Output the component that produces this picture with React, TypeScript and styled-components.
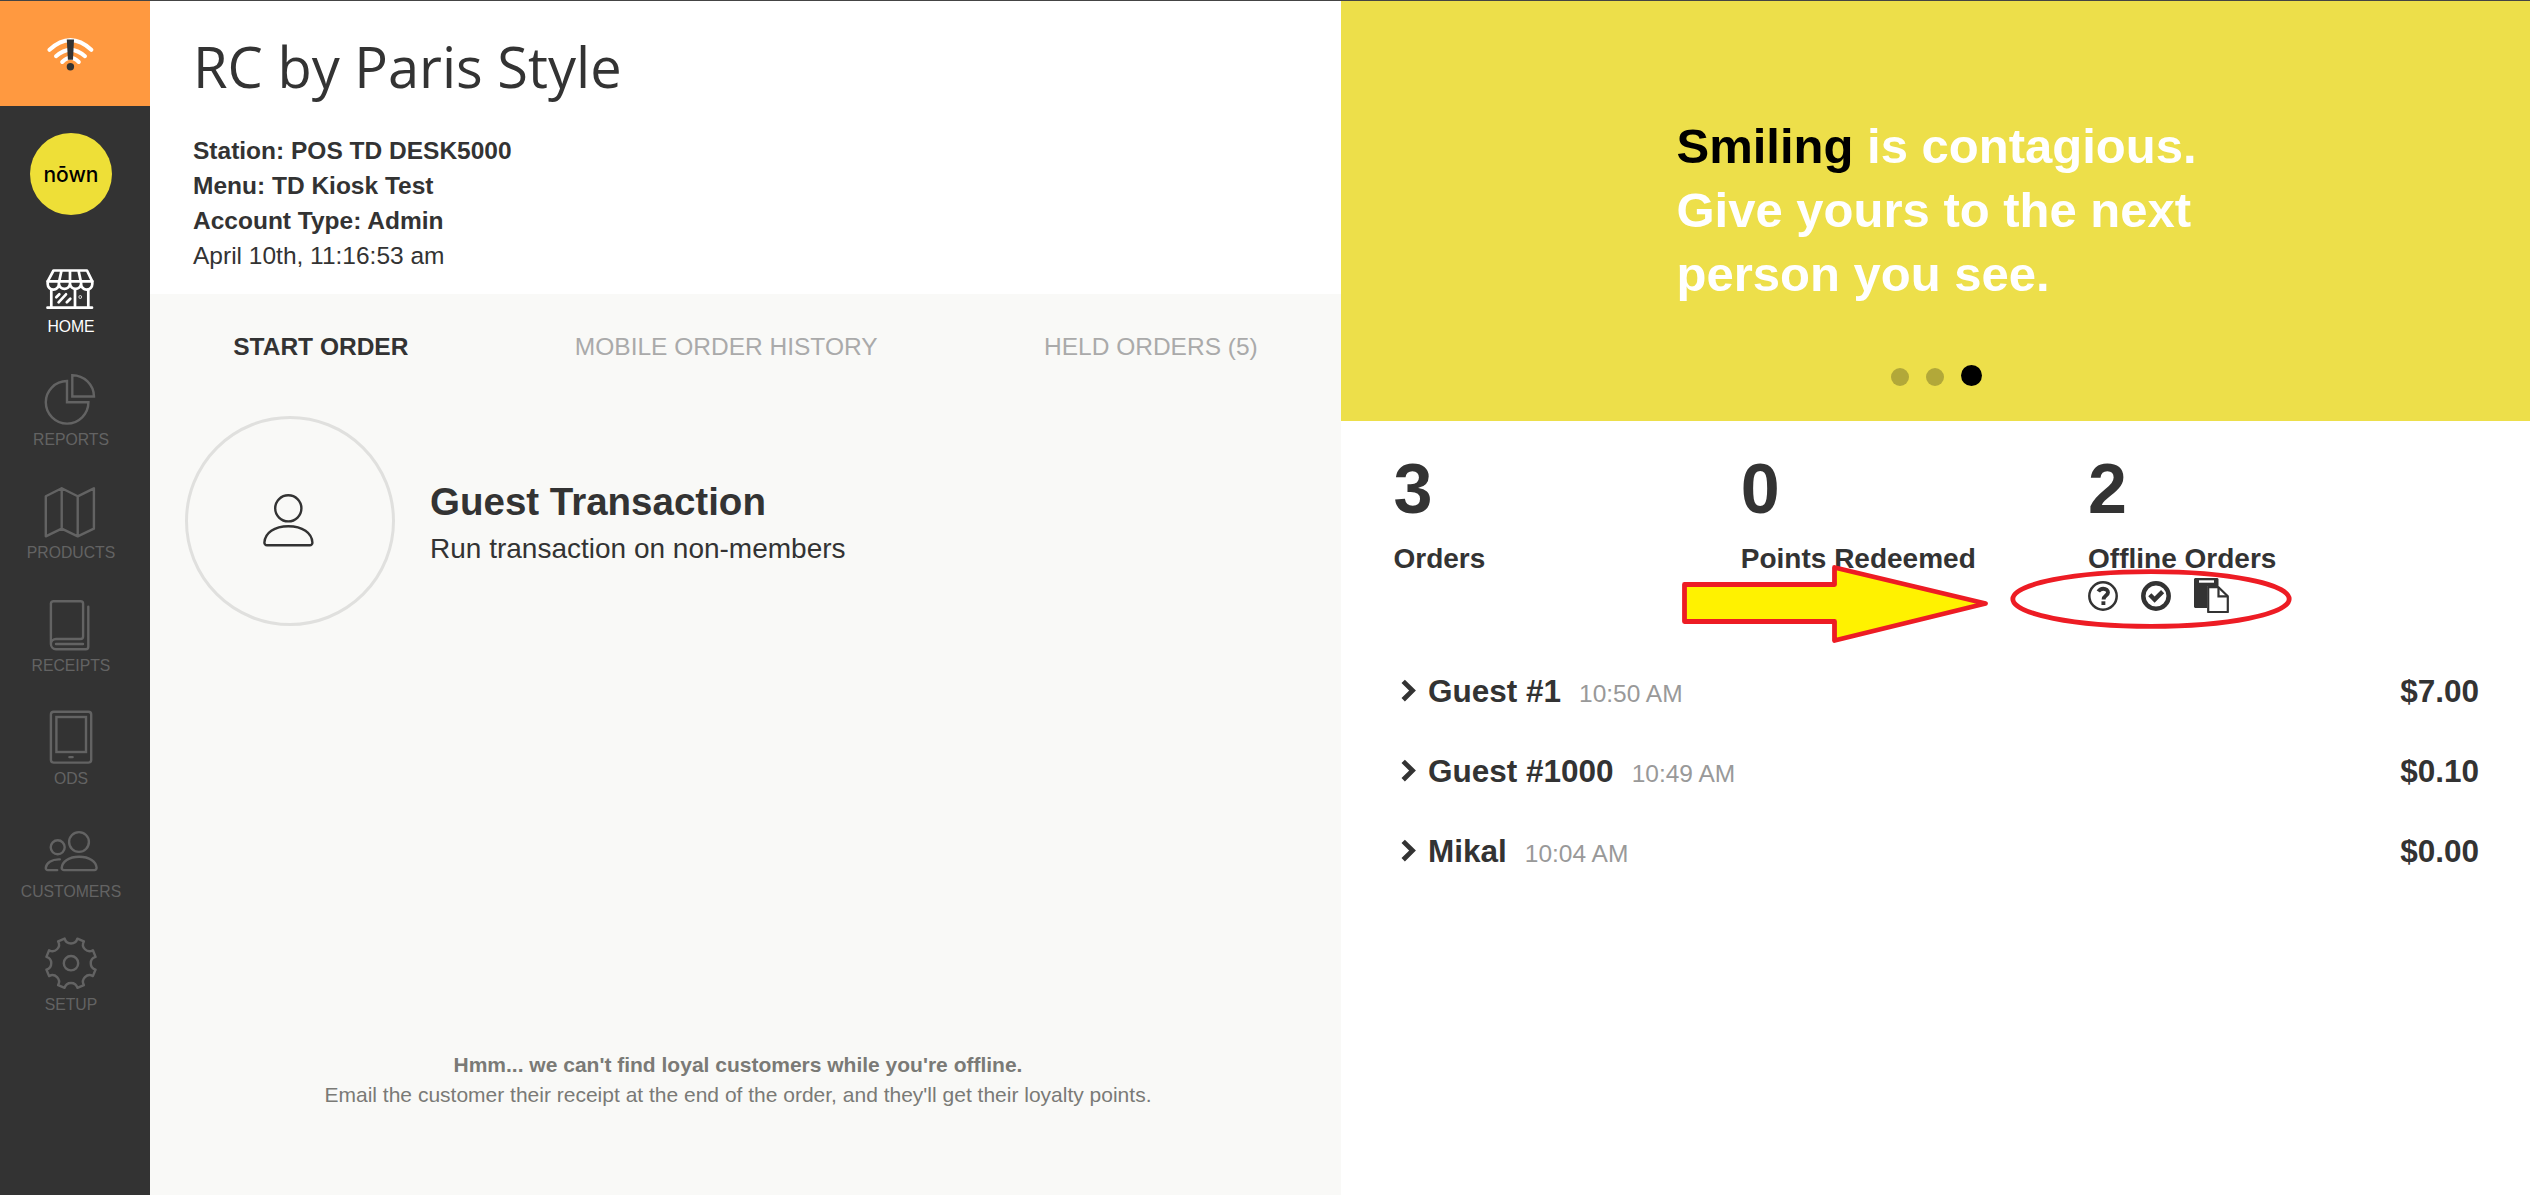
import { ReactNode, useState } from 'react';
import styled, { createGlobalStyle, css } from 'styled-components';

const GlobalStyle = createGlobalStyle`
  * {
    box-sizing: border-box;
  }
  body {
    margin: 0;
    color: #333;
    background-color: white;
    font-family: 'Liberation Sans', Arial, sans-serif;
  }
`;

const Container = styled.div`
  display: grid;
  grid-template-columns: 150px 1191px 1fr;
  height: 100vh;
  overflow: hidden;
  border-top: 1px solid #444;
`;

const Sidebar = styled.nav`
  display: flex;
  flex-direction: column;
  background-color: #333;
`;

const OfflineAlert = styled.div`
  display: flex;
  justify-content: center;
  align-items: center;
  height: 105px;
  padding-right: 8px;
  background-color: #ff9940;
`;

const Logo = styled.div`
  display: flex;
  justify-content: center;
  width: 82px;
  height: 82px;
  margin: 27px 0 46px 30px;
  border-radius: 50%;
  background-color: #eedf37;
  color: black;
  font-family: Inter, sans-serif;
  font-size: 21px;
  font-weight: 500;
  line-height: 83px;
`;

const NavItem = styled.a<{ active?: boolean }>`
  display: flex;
  flex-direction: column;
  align-items: center;
  height: 113px;
  padding-right: 8px;
  font-size: 15.75px;
  line-height: 20px;
  color: ${(prop) => (prop.active ? 'white' : '#636363')};
  cursor: pointer;
`;

const NavIcon = styled.svg`
  width: 52px;
  height: 52px;
  margin-bottom: 4px;
  overflow: visible;
  fill: none;
  stroke: currentColor;
  stroke-width: 2.4px;
  stroke-linecap: round;
  stroke-linejoin: round;
`;

const Main = styled.main`
  display: flex;
  flex-direction: column;
  background-color: #f9f9f7;
`;

const Header = styled.header`
  height: 293px;
  padding: 23px 43px 0;
  background-color: white;
`;

const Title = styled.h1`
  margin: 0 0 25px;
  font-family: 'Open Sans', sans-serif;
  font-size: 56px;
  font-weight: 400;
  line-height: 84px;
`;

const Info = styled.p<{ bold?: boolean }>`
  margin: 0;
  font-size: 24.5px;
  font-weight: ${(prop) => (prop.bold ? 'bold' : 'normal')};
  line-height: 35px;
`;

const Tabs = styled.div`
  display: flex;
  justify-content: space-around;
  padding-top: 35px;
`;

const Tab = styled.button<{ selected: boolean }>`
  padding: 0;
  border: none;
  background: none;
  font-family: inherit;
  font-size: 24.5px;
  line-height: 35px;
  cursor: pointer;
  ${(prop) =>
    prop.selected
      ? css`
          color: #333;
          font-weight: bold;
        `
      : css`
          color: #aaa;
          font-weight: normal;
        `};
`;

const Guest = styled.div`
  display: flex;
  align-items: center;
  gap: 35px;
  margin: 52px 0 0 35px;
`;

const Avatar = styled.div`
  display: flex;
  justify-content: center;
  align-items: center;
  width: 210px;
  height: 210px;
  border: 3px solid #e0e0de;
  border-radius: 50%;
`;

const GuestTitle = styled.div`
  font-size: 38.5px;
  font-weight: bold;
  line-height: 54px;
`;

const GuestText = styled.div`
  font-size: 28px;
  line-height: 39px;
`;

const Notice = styled.div`
  margin-top: auto;
  padding: 0 15px 85px 0;
  color: #7a7a76;
  font-size: 21px;
  line-height: 30px;
  text-align: center;
`;

const Side = styled.aside`
  display: flex;
  flex-direction: column;
  background-color: white;
`;

const Banner = styled.div`
  display: flex;
  flex-direction: column;
  align-items: center;
  justify-content: space-between;
  height: 420px;
  padding: 113px 0 35px 2px;
  background-color: #eddf4a;
`;

const Quote = styled.div`
  width: 520px;
  color: white;
  font-size: 49px;
  font-weight: bold;
  line-height: 64px;
  white-space: nowrap;
`;

const Highlight = styled.span`
  color: black;
`;

const Dots = styled.div`
  display: flex;
  align-items: flex-end;
  gap: 17px;
`;

const Dot = styled.span<{ current?: boolean }>`
  width: ${(prop) => (prop.current ? 21 : 18)}px;
  height: ${(prop) => (prop.current ? 21 : 18)}px;
  border-radius: 50%;
  background-color: ${(prop) => (prop.current ? 'black' : '#b2a839')};
`;

const Stats = styled.div`
  position: relative;
  display: grid;
  grid-template-columns: repeat(3, 347.3px);
  height: 230px;
  padding: 28px 0 0 52.5px;
`;

const StatValue = styled.div`
  margin-bottom: 12px;
  font-size: 70px;
  font-weight: bold;
  line-height: 80px;
`;

const StatLabel = styled.div`
  font-size: 28px;
  font-weight: bold;
  line-height: 36px;
`;

const StatIcons = styled.div`
  display: flex;
  align-items: center;
  gap: 23px;
  height: 35px;
  margin-top: 1px;
`;

const Callout = styled.svg`
  position: absolute;
  top: 0;
  left: 0;
  pointer-events: none;
  stroke: #ed1c24;
  stroke-width: 4.8px;
  stroke-linejoin: round;
`;

const Order = styled.div`
  display: flex;
  align-items: baseline;
  height: 80px;
  padding: 0 51px 0 60px;
  font-size: 31.5px;
  font-weight: bold;
  line-height: 80px;
`;

const Chevron = styled.svg`
  align-self: center;
  margin-right: 11px;
`;

const Time = styled.span`
  margin-left: 18px;
  color: #999;
  font-size: 24.5px;
  font-weight: normal;
`;

const Price = styled.span`
  margin-left: auto;
`;

const gearPoint = (degrees: number, radius: number) => {
  const rad = ((degrees - 90) * Math.PI) / 180;
  return `${(26 + radius * Math.cos(rad)).toFixed(2)} ${(24.2 + radius * Math.sin(rad)).toFixed(2)}`;
};

// eight notches cut out of the rim, one every 45 degrees
const gearPath =
  [0, 45, 90, 135, 180, 225, 270, 315]
    .map(
      (a, i) =>
        `${i ? 'L' : 'M'}${gearPoint(a - 14.5, 25.4)}A6.6 6.6 0 0 0 ${gearPoint(a + 14.5, 25.4)}`
    )
    .join('') + 'Z';

const navItems: { label: string; icon: ReactNode }[] = [
  {
    label: 'HOME',
    icon: (
      <g strokeWidth="2.7">
        <path d="M8.5 9.5H42L47.3 20.3H2.7ZM16.5 9.5L14.2 20.3M25 9.5V20.3M33.5 9.5L35.8 20.3" />
        <path d="M2.7 20.3V23A5.6 5.6 0 0 0 13.9 23V20.3M13.9 23A5.6 5.6 0 0 0 25 23V20.3M25 23A5.6 5.6 0 0 0 36.1 23V20.3M36.1 23A5.6 5.6 0 0 0 47.3 23V20.3" />
        <path d="M6.3 28.5V46.5M43.3 28.5V46.5M30 28.5V46.5M2.5 46.7H47" />
        <path d="M11.3 36.3L14.3 33.3M13.6 41.3L21 33.3M21.8 41.3L25.3 37.7" />
        <circle cx="35.2" cy="36" r="0.4" />
      </g>
    ),
  },
  {
    label: 'REPORTS',
    icon: (
      <g strokeLinejoin="miter">
        <path d="M22 7A21.3 21.3 0 1 0 43.4 28.3H22Z" />
        <path d="M27.3 1.3A21.7 21.7 0 0 1 49 22.5H27.3Z" />
      </g>
    ),
  },
  {
    label: 'PRODUCTS',
    icon: (
      <path d="M0.8 9.3L16.7 1.3L32.7 9.3L48.9 1.3V41.7L32.7 49.3L16.7 41.7L0.8 49.3ZM16.7 1.3V41.7M32.7 9.3V49.3" />
    ),
  },
  {
    label: 'RECEIPTS',
    icon: (
      <path d="M5.9 44V3.7A2.7 2.7 0 0 1 8.6 1.2H35.6A2.5 2.5 0 0 1 38.1 3.7V36.5A2.5 2.5 0 0 1 35.6 39H11A5.1 5.1 0 0 0 11 49.2H40.8A2.5 2.5 0 0 0 43.3 46.7V6.8M11 44H38" />
    ),
  },
  {
    label: 'ODS',
    icon: (
      <>
        <rect x="5.9" y="-1.2" width="40.3" height="50.8" rx="2.8" />
        <rect x="11.4" y="4" width="29.6" height="35" strokeLinejoin="miter" />
        <path d="M24.4 44.1H27.6" />
      </>
    ),
  },
  {
    label: 'CUSTOMERS',
    icon: (
      <>
        <circle cx="12.7" cy="21.3" r="7" />
        <circle cx="34" cy="16" r="9.9" />
        <path d="M19 44.1H49.5A2.2 2.2 0 0 0 51.6 41.8C51.2 35.5 44.5 30.7 34.2 30.7S17.1 35.5 16.7 41.8A2.2 2.2 0 0 0 19 44.1Z" />
        <path d="M14.8 33.4C6.5 33 1.1 37.3 0.8 42A2 2 0 0 0 2.8 44.1H12.2" />
      </>
    ),
  },
  {
    label: 'SETUP',
    icon: (
      <>
        <path d={gearPath} />
        <circle cx="26" cy="24.2" r="7.2" />
      </>
    ),
  },
];

const tabs = ['START ORDER', 'MOBILE ORDER HISTORY', 'HELD ORDERS (5)'];

const stats = [
  { value: 3, label: 'Orders' },
  { value: 0, label: 'Points Redeemed' },
  { value: 2, label: 'Offline Orders', icons: true },
];

const orders = [
  { name: 'Guest #1', time: '10:50 AM', price: '$7.00' },
  { name: 'Guest #1000', time: '10:49 AM', price: '$0.10' },
  { name: 'Mikal', time: '10:04 AM', price: '$0.00' },
];

function OfflineIcons() {
  return (
    <StatIcons>
      <svg width="30" height="30" fill="none" stroke="#333">
        <circle cx="15" cy="15" r="13.7" strokeWidth="2.5" />
        <path
          d="M10.3 10.6C11.5 8.6 13 7.7 15.2 7.7C18 7.7 20 9.3 20 11.6C20 14.6 15.6 14.6 15.6 18.4"
          strokeWidth="3.9"
        />
        <path d="M15.4 20.3V24" strokeWidth="3.9" />
      </svg>
      <svg width="30" height="30" fill="none" stroke="#333">
        <circle cx="15" cy="15" r="12.7" strokeWidth="4.5" />
        <path d="M8.8 13.8L13.6 18.6L21.6 10.6" strokeWidth="4.4" />
      </svg>
      <svg width="35" height="35">
        <path
          d="M1 0H23.5L24.5 1V8H15A2 2 0 0 0 13 10V30H1L0 29V1Z"
          fill="#333"
        />
        <rect x="5" y="2.3" width="15" height="2.4" fill="white" />
        <path
          d="M14.2 9.2H24.5L33.8 18.2V34H14.2Z"
          fill="white"
          stroke="#333"
          strokeWidth="2.2"
          strokeLinejoin="round"
        />
        <path d="M24.5 9V18.3H34" fill="none" stroke="#333" strokeWidth="2.2" />
      </svg>
    </StatIcons>
  );
}

function App() {
  const [tab, setTab] = useState(tabs[0]);

  return (
    <Container>
      <GlobalStyle />
      <Sidebar>
        <OfflineAlert>
          <svg width="48" height="36" fill="none" stroke="white">
            <g strokeWidth="4" strokeLinecap="round">
              <path d="M2.5 13.8Q23.4 -5.4 44.3 13.8" />
              <path d="M9 20.2Q23.4 7.4 38 20.2" />
              <path d="M15.2 26Q23.4 17.4 31.8 26" />
            </g>
            <path d="M19.8 3.5H27L26 23.8H20.9Z" fill="#333" stroke="none" />
            <circle cx="23.4" cy="30.7" r="3.7" fill="#333" stroke="none" />
          </svg>
        </OfflineAlert>
        <Logo>nōwn</Logo>
        {navItems.map(({ label, icon }) => (
          <NavItem key={label} active={label === 'HOME'}>
            <NavIcon viewBox="0 0 52 52">{icon}</NavIcon>
            {label}
          </NavItem>
        ))}
      </Sidebar>
      <Main>
        <Header>
          <Title>RC by Paris Style</Title>
          <Info bold>Station: POS TD DESK5000</Info>
          <Info bold>Menu: TD Kiosk Test</Info>
          <Info bold>Account Type: Admin</Info>
          <Info>April 10th, 11:16:53 am</Info>
        </Header>
        <Tabs>
          {tabs.map((name) => (
            <Tab
              key={name}
              selected={name === tab}
              onClick={() => setTab(name)}
            >
              {name}
            </Tab>
          ))}
        </Tabs>
        <Guest>
          <Avatar>
            <svg
              width="54"
              height="54"
              fill="none"
              stroke="#333"
              strokeWidth="2.4"
            >
              <circle cx="25.3" cy="14.3" r="13.1" />
              <path d="M4 51.3H46.8A2.6 2.6 0 0 0 49.4 48.5C48.8 38.8 39.5 32.3 25.4 32.3S2 38.8 1.4 48.5A2.6 2.6 0 0 0 4 51.3Z" />
            </svg>
          </Avatar>
          <div>
            <GuestTitle>Guest Transaction</GuestTitle>
            <GuestText>Run transaction on non-members</GuestText>
          </div>
        </Guest>
        <Notice>
          <b>Hmm... we can't find loyal customers while you're offline.</b>
          <br />
          Email the customer their receipt at the end of the order, and they'll
          get their loyalty points.
        </Notice>
      </Main>
      <Side>
        <Banner>
          <Quote>
            <Highlight>Smiling</Highlight> is contagious.
            <br />
            Give yours to the next
            <br />
            person you see.
          </Quote>
          <Dots>
            <Dot />
            <Dot />
            <Dot current />
          </Dots>
        </Banner>
        <Stats>
          {stats.map(({ value, label, icons }) => (
            <div key={label}>
              <StatValue>{value}</StatValue>
              <StatLabel>{label}</StatLabel>
              {icons && <OfflineIcons />}
            </div>
          ))}
          <Callout width="1189" height="230">
            <path
              d="M343.5 163.5H493.5V146.5L644.5 182.5L493.5 219.5V200.5H343.5Z"
              fill="#fff200"
            />
            <ellipse cx="810" cy="178" rx="138.2" ry="27.3" fill="none" />
          </Callout>
        </Stats>
        {orders.map(({ name, time, price }) => (
          <Order key={name}>
            <Chevron width="16" height="24" fill="none" stroke="#333">
              <path d="M2.2 2.4L11.5 11.6L2.2 20.8" strokeWidth="4.8" />
            </Chevron>
            {name}
            <Time>{time}</Time>
            <Price>{price}</Price>
          </Order>
        ))}
      </Side>
    </Container>
  );
}

export default App;
